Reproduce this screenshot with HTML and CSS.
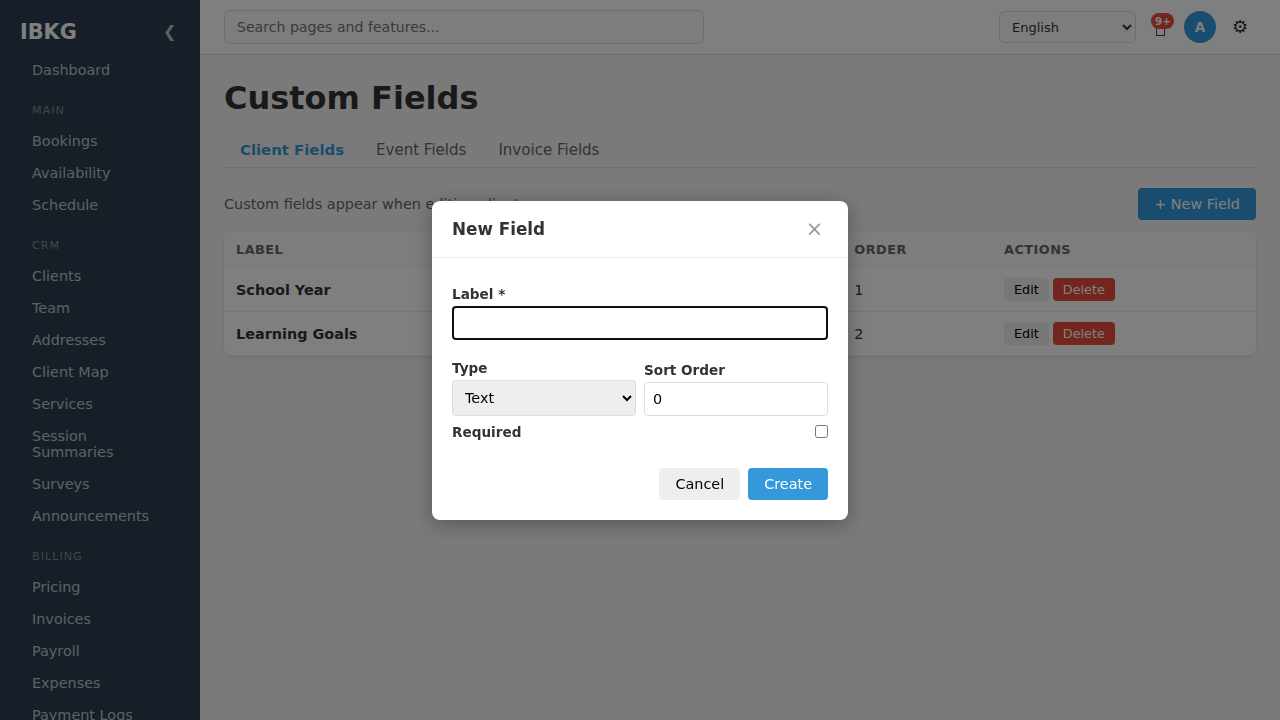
FILE: index.html
```html
<!DOCTYPE html>
<html lang="en">
<head>
<meta charset="utf-8">
<title>Custom Fields</title>
<link rel="stylesheet" href="styles.css">
</head>
<body>
<div class="app">
  <aside class="sidebar">
    <div class="brand"><span class="brand-name">IBKG</span><span class="collapse">❮</span></div>
    <nav class="nav">
      <a class="nav-link">Dashboard</a>
      <div class="nav-section">Main</div>
      <a class="nav-link">Bookings</a>
      <a class="nav-link">Availability</a>
      <a class="nav-link">Schedule</a>
      <div class="nav-section">CRM</div>
      <a class="nav-link">Clients</a>
      <a class="nav-link">Team</a>
      <a class="nav-link">Addresses</a>
      <a class="nav-link">Client Map</a>
      <a class="nav-link">Services</a>
      <a class="nav-link">Session Summaries</a>
      <a class="nav-link">Surveys</a>
      <a class="nav-link">Announcements</a>
      <div class="nav-section">Billing</div>
      <a class="nav-link">Pricing</a>
      <a class="nav-link">Invoices</a>
      <a class="nav-link">Payroll</a>
      <a class="nav-link">Expenses</a>
      <a class="nav-link">Payment Logs</a>
    </nav>
  </aside>
  <div class="main">
    <header class="topbar">
      <input class="search" type="text" placeholder="Search pages and features...">
      <div class="tools">
        <select class="language"><option>English</option></select>
        <div class="bell"><span class="bell-icon"></span><span class="badge">9+</span></div>
        <div class="avatar">A</div>
        <div class="gear">⚙</div>
      </div>
    </header>
    <main class="content">
      <h1 class="title">Custom Fields</h1>
      <div class="tabs">
        <a class="tab tab-active">Client Fields</a>
        <a class="tab">Event Fields</a>
        <a class="tab">Invoice Fields</a>
      </div>
      <div class="intro">
        <span>Custom fields appear when editing clients.</span>
        <button class="btn btn-primary">+ New Field</button>
      </div>
      <table class="table">
        <colgroup><col class="col-label"><col class="col-type"><col class="col-required"><col class="col-order"><col></colgroup>
        <thead><tr><th>Label</th><th>Type</th><th>Required</th><th>Order</th><th>Actions</th></tr></thead>
        <tbody>
          <tr><td><strong>School Year</strong></td><td>Text</td><td>No</td><td>1</td><td><div class="actions"><button class="btn btn-small">Edit</button><button class="btn btn-small btn-danger">Delete</button></div></td></tr>
          <tr><td><strong>Learning Goals</strong></td><td>Text</td><td>No</td><td>2</td><td><div class="actions"><button class="btn btn-small">Edit</button><button class="btn btn-small btn-danger">Delete</button></div></td></tr>
        </tbody>
      </table>
    </main>
  </div>
</div>
<div class="overlay">
  <div class="modal">
    <div class="modal-head"><h2 class="modal-title">New Field</h2><span class="close">×</span></div>
    <div class="modal-body">
      <label class="field"><span class="field-name">Label *</span><input class="input input-focused" type="text"></label>
      <div class="field-row">
        <label class="field"><span class="field-name">Type</span><select class="input select"><option>Text</option></select></label>
        <label class="field"><span class="field-name">Sort Order</span><input class="input" type="text" value="0"></label>
      </div>
      <label class="check"><span class="field-name">Required</span><input class="checkbox" type="checkbox"></label>
      <div class="modal-actions"><button class="btn">Cancel</button><button class="btn btn-primary">Create</button></div>
    </div>
  </div>
</div>
</body>
</html>
```
FILE: styles.css
```css
* { box-sizing: border-box; }
body { margin: 0; height: 720px; overflow: hidden; background: #f5f5f5; color: #333; font-family: "DejaVu Sans", sans-serif; font-size: 14.4px; }
input, select, button { font-family: inherit; font-size: 14.4px; }

.app { display: flex; height: 720px; }

.sidebar { width: 200px; flex: none; overflow: hidden; background: #2c3e50; color: #fff; }
.brand { display: flex; justify-content: space-between; align-items: center; height: 54px; padding: 9px 23.5px 0 20px; }
.brand-name { font-size: 20.8px; font-weight: bold; }
.collapse { font-size: 16px; color: #bdc3c7; }
.nav-link { display: block; padding: 8px 32px; line-height: 16px; color: #bdc3c7; }
.nav-section { height: 39px; padding: 18px 32px 0; font-size: 11.2px; line-height: 13px; letter-spacing: 1px; text-transform: uppercase; color: #7f8c8d; }

.main { flex: 1; min-width: 0; }
.topbar { display: flex; align-items: center; justify-content: space-between; height: 55px; padding: 0 24px; background: #fff; border-bottom: 1px solid #e0e0e0; }
.search { width: 480px; height: 34px; padding: 0 12px; border: 1px solid #ddd; border-radius: 6px; background: #fafafa; font-size: 14.1px; }
.search::placeholder { color: #757575; }
.tools { display: flex; align-items: center; }
.language { width: 137px; height: 32px; padding: 0 8px; border: 1px solid #ddd; border-radius: 6px; background: #fafafa; color: #333; font-size: 13px; }
.bell { position: relative; display: flex; justify-content: center; width: 32px; height: 32px; margin-left: 8px; padding: 12px 0 0 1px; }
.bell-icon { width: 9px; height: 13px; border: 1px solid #444; }
.badge { position: absolute; top: 2px; right: 2px; width: 23px; height: 16px; padding-left: 1px; border-radius: 8px; background: #e74c3c; color: #fff; font-size: 10.4px; font-weight: bold; line-height: 16px; text-align: center; }
.avatar { width: 32px; height: 32px; margin-left: 8px; border-radius: 50%; background: #3498db; color: #fff; font-size: 13.6px; font-weight: bold; line-height: 32px; text-align: center; }
.gear { width: 32px; margin: 0 0 0 8px; font-size: 18px; line-height: 32px; text-align: center; }

.content { padding: 25px 24px 24px; }
.title { margin: 0; font-size: 32px; line-height: 37px; }
.tabs { display: flex; height: 35px; margin-top: 16px; border-bottom: 1px solid #ddd; }
.tab { padding: 8px 16px; font-size: 15.04px; line-height: 18px; color: #666; }
.tab-active { font-size: 14.88px; font-weight: bold; color: #3498db; }
.intro { display: flex; align-items: center; justify-content: space-between; height: 32px; margin: 20px 0 12px; color: #666; }

.btn { height: 32px; padding: 0 16px; border: 0; border-radius: 4px; background: #eee; color: #000; }
.btn-primary { background: #3498db; color: #fff; }
.btn-small { height: 23px; padding: 0 10px; font-size: 12.8px; }
.btn-danger { background: #e74c3c; color: #fff; }

.table { width: 100%; table-layout: fixed; border-spacing: 0; overflow: hidden; border-radius: 8px; background: #fff; box-shadow: 0 1px 3px rgba(0, 0, 0, 0.1); }
.col-label { width: 270px; }
.col-type { width: 170px; }
.col-required { width: 178.3px; }
.col-order { width: 149.7px; }
th { height: 36px; padding: 0 12px; border-bottom: 1px solid #eee; background: #fafafa; color: #666; font-size: 12.8px; letter-spacing: 0.5px; text-align: left; text-transform: uppercase; }
td { height: 44px; padding: 0 12px; border-bottom: 1px solid #eee; }
.actions { display: flex; gap: 4px; }

.overlay { position: fixed; inset: 0; display: flex; align-items: center; justify-content: center; background: rgba(0, 0, 0, 0.5); }
.modal { width: 416px; height: 319px; border-radius: 8px; background: #fff; box-shadow: 0 4px 20px rgba(0, 0, 0, 0.3); }
.modal-head { display: flex; align-items: center; justify-content: space-between; height: 57px; padding: 0 20px; border-bottom: 1px solid #eee; }
.modal-title { margin: 0; font-size: 16.8px; }
.close { width: 28px; padding: 1px 0 0 1px; color: #999; font-size: 20.8px; line-height: 28px; text-align: center; }
.modal-body { padding: 28px 20px 20px; }
.field { display: flex; flex: 1; flex-direction: column; gap: 4px; }
.field-name { font-size: 13.6px; font-weight: bold; line-height: 16px; }
.field-row { display: flex; align-items: flex-end; gap: 8px; margin-top: 20px; }
.input { width: 100%; height: 34px; padding: 0 8px; border: 1px solid #ddd; border-radius: 4px; background: #fff; color: #000; }
.input-focused { border: 2px solid #101010; outline: none; }
.select { height: 36px; background: #eee; }
.check { display: flex; align-items: center; justify-content: space-between; height: 16px; margin-top: 8px; }
.checkbox { width: 13px; height: 13px; margin: 0; }
.modal-actions { display: flex; justify-content: flex-end; gap: 8px; margin-top: 28px; }
```
